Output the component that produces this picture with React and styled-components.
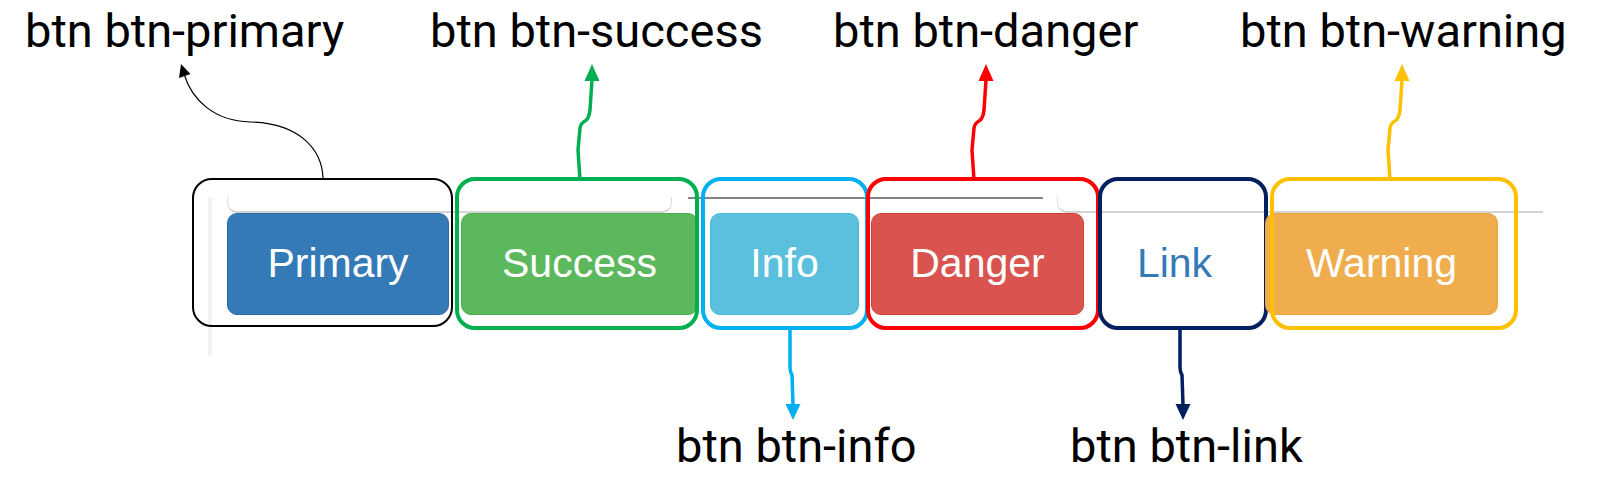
import React from "react";
import styled, { createGlobalStyle } from "styled-components";

const GlobalStyle = createGlobalStyle`
  html, body {
    margin: 0;
    padding: 0;
    background: #fff;
  }
  body {
    width: 1623px;
    height: 494px;
    overflow: hidden;
  }
`;

const Figure = styled.div`
  position: relative;
  width: 1623px;
  height: 494px;
  display: flex;
  flex-direction: column;
  font-family: Roboto, "Liberation Sans", sans-serif;
`;

const LabelRow = styled.div`
  display: grid;
  grid-template-columns: ${(p) => p.$cols};
  padding-left: ${(p) => p.$left}px;
  margin-top: ${(p) => p.$top}px;
`;

const Label = styled.span`
  font-size: 47px;
  line-height: 54px;
  color: #000;
  white-space: nowrap;
`;

// the pasted bootstrap screenshot behind the buttons
const Shot = styled.div`
  margin: 139px 0 0 208px;
  width: 1335px;
  height: 160px;
  box-sizing: border-box;
  border-left: 4px solid #f3f3f3;
  padding-left: 15px;
  display: flex;
  flex-direction: column;
`;

const TabRow = styled.div`
  display: flex;
  height: 16px;
`;

const TabEdge = styled.div`
  box-sizing: border-box;
  height: 16px;
  width: ${(p) => (p.$width ? `${p.$width}px` : "auto")};
  flex: ${(p) => (p.$width ? "none" : 1)};
  margin-left: ${(p) => p.$gap || 0}px;
  border-left: ${(p) => (p.$left ? "1.5px solid #dcdcdc" : "none")};
  border-right: ${(p) => (p.$right ? "1.5px solid #dcdcdc" : "none")};
  border-bottom: ${(p) => (p.$bottom ? "2px solid #d4d4d4" : "none")};
  border-top: ${(p) => (p.$top ? "2px solid #858585" : "none")};
  border-radius: ${(p) => (p.$left ? "0 0 0 10px" : "0")};
  ${(p) => p.$left && p.$right && "border-radius: 0 0 10px 10px;"}
`;

const ButtonRow = styled.div`
  display: flex;
  gap: 12px;
  height: 102px;
`;

const Slot = styled.div`
  position: relative;
  display: flex;
`;

const Btn = styled.div`
  box-sizing: border-box;
  width: ${(p) => p.$w}px;
  height: 102px;
  display: flex;
  align-items: center;
  justify-content: center;
  border-radius: 10px;
  border: 1px solid ${(p) => p.$edge};
  background: ${(p) => p.$bg};
  color: ${(p) => p.$fg};
  font-family: "Liberation Sans", Arial, sans-serif;
  font-size: 41px;
  line-height: 1;
  padding-bottom: 2px;
`;

const Frame = styled.div`
  position: absolute;
  top: ${(p) => p.$o[0]}px;
  right: ${(p) => p.$o[1]}px;
  bottom: ${(p) => p.$o[2]}px;
  left: ${(p) => p.$o[3]}px;
  border: ${(p) => p.$stroke}px solid ${(p) => p.$color};
  border-radius: 20px;
  pointer-events: none;
`;

const Arrows = styled.svg`
  position: absolute;
  top: 0;
  left: 0;
  pointer-events: none;
`;

const buttons = [
  { text: "Primary", w: 222, bg: "#337ab7", edge: "#2e6da4", fg: "#fff", frame: "#000", stroke: 2, o: [-35, -4, -12, -35] },
  { text: "Success", w: 237, bg: "#5cb85c", edge: "#4cae4c", fg: "#fff", frame: "#00b050", stroke: 4, o: [-36, -1, -15, -6] },
  { text: "Info", w: 149, bg: "#5bc0de", edge: "#46b8da", fg: "#fff", frame: "#00b0f0", stroke: 4, o: [-36, -10, -15, -9] },
  { text: "Danger", w: 213, bg: "#d9534f", edge: "#d43f3a", fg: "#fff", frame: "#ff0000", stroke: 4, o: [-36, -16, -15, -5] },
  { text: "Link", w: 157, bg: "transparent", edge: "transparent", fg: "#337ab7", frame: "#002060", stroke: 4, o: [-36, -15, -15, 2] },
  { text: "Warning", w: 233, bg: "#f0ad4e", edge: "#eea236", fg: "#fff", frame: "#ffc000", stroke: 4, o: [-36, -20, -15, 5] },
];

const upPath = (b) =>
  `M${b},180 L${b - 2},150 L${b},128 Q${b + 1},123 ${b + 5},121 Q${b + 9},119 ${b + 10},110 L${b + 12},80`;
const upHead = (b) => `${b + 12},64 ${b + 4.5},81 ${b + 19.5},81`;
const downPath = (b) => `M${b},329 L${b},366 Q${b},372 ${b + 2},375 L${b + 3},405`;
const downHead = (b) => `${b + 3},420 ${b - 4.5},404 ${b + 10.5},404`;

const App = () => (
  <>
    <GlobalStyle />
    <Figure>
      <LabelRow $left={25} $top={4} $cols="405px 403px 407px auto">
        <Label>btn btn-primary</Label>
        <Label>btn btn-success</Label>
        <Label>btn btn-danger</Label>
        <Label>btn btn-warning</Label>
      </LabelRow>

      <Shot>
        <TabRow>
          <TabEdge $width={445} $left $right $bottom />
          <TabEdge $width={355} $gap={16} $top />
          <TabEdge $gap={14} $left $bottom />
        </TabRow>
        <ButtonRow>
          {buttons.map((b) => (
            <Slot key={b.text}>
              <Btn $w={b.w} $bg={b.bg} $edge={b.edge} $fg={b.fg}>
                {b.text}
              </Btn>
              <Frame $o={b.o} $color={b.frame} $stroke={b.stroke} />
            </Slot>
          ))}
        </ButtonRow>
      </Shot>

      <LabelRow $left={676} $top={62} $cols="394px auto">
        <Label>btn btn-info</Label>
        <Label>btn btn-link</Label>
      </LabelRow>

      <Arrows width="1623" height="494" viewBox="0 0 1623 494">
        <path
          d="M323,178 C322,150 300,123 250,122 C214,121 192,100 184,74"
          fill="none"
          stroke="#000"
          strokeWidth="1.2"
        />
        <polygon points="181,64 190.5,74 179,78" fill="#000" />

        <path d={upPath(580)} fill="none" stroke="#00b050" strokeWidth="3.5" />
        <polygon points={upHead(580)} fill="#00b050" />
        <path d={upPath(974)} fill="none" stroke="#ff0000" strokeWidth="3.5" />
        <polygon points={upHead(974)} fill="#ff0000" />
        <path d={upPath(1390)} fill="none" stroke="#ffc000" strokeWidth="3.5" />
        <polygon points={upHead(1390)} fill="#ffc000" />

        <path d={downPath(790)} fill="none" stroke="#00b0f0" strokeWidth="3.5" />
        <polygon points={downHead(790)} fill="#00b0f0" />
        <path d={downPath(1180)} fill="none" stroke="#002060" strokeWidth="3.5" />
        <polygon points={downHead(1180)} fill="#002060" />
      </Arrows>
    </Figure>
  </>
);

export default App;
